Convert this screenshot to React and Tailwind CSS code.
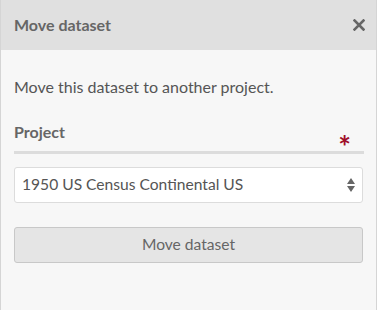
export default function App() {
  return (
    <div className="w-[377px] h-[310px] bg-[#f7f7f7] border-x border-[#d5d5d5] flex flex-col" style={{ fontFamily: 'Lato, "Noto Sans", sans-serif' }}>
      <div className="h-[50px] shrink-0 bg-[#e0e0e0] flex items-center justify-between pl-[13px] pr-[11px]">
        <h2 className="text-[16px] font-bold text-[#666]">Move dataset</h2>
        <svg width="12" height="12" viewBox="0 0 12 12" className="text-[#666]">
          <path d="M1.5 1.5 L10.5 10.5 M10.5 1.5 L1.5 10.5" stroke="currentColor" strokeWidth="2.6" strokeLinecap="square" />
        </svg>
      </div>
      <div className="px-[13px] pt-[27px]">
        <p className="text-[16px] text-[#555] leading-[20px]">Move this dataset to another project.</p>
        <div className="mt-[25px] flex items-end justify-between pb-[5px] border-b-[3px] border-[#dcdcdc] mr-[-1px]">
          <span className="text-[16px] font-bold text-[#666] leading-[20px] mb-[4px]">Project</span>
          <span className="text-[30px] font-bold text-[#a0102a] leading-none mr-[13px] mb-[-15px]">*</span>
        </div>
        <div className="mt-[13px] h-[36px] bg-white border border-[#dcdcdc] rounded-[3px] flex items-center justify-between pl-[7px] pr-[6px]">
          <span className="text-[15.6px] text-[#555]">1950 US Census Continental US</span>
          <svg width="10" height="16" viewBox="0 0 10 16" className="text-[#666]">
            <path d="M5 1 L9 7 L1 7 Z M1 9 L9 9 L5 15 Z" fill="currentColor" />
          </svg>
        </div>
        <button className="mt-[24px] w-full h-[36px] bg-[#e5e5e5] border border-[#c8c8c8] rounded-[3px] text-[15.6px] text-[#666]">
          Move dataset
        </button>
      </div>
    </div>
  );
}
